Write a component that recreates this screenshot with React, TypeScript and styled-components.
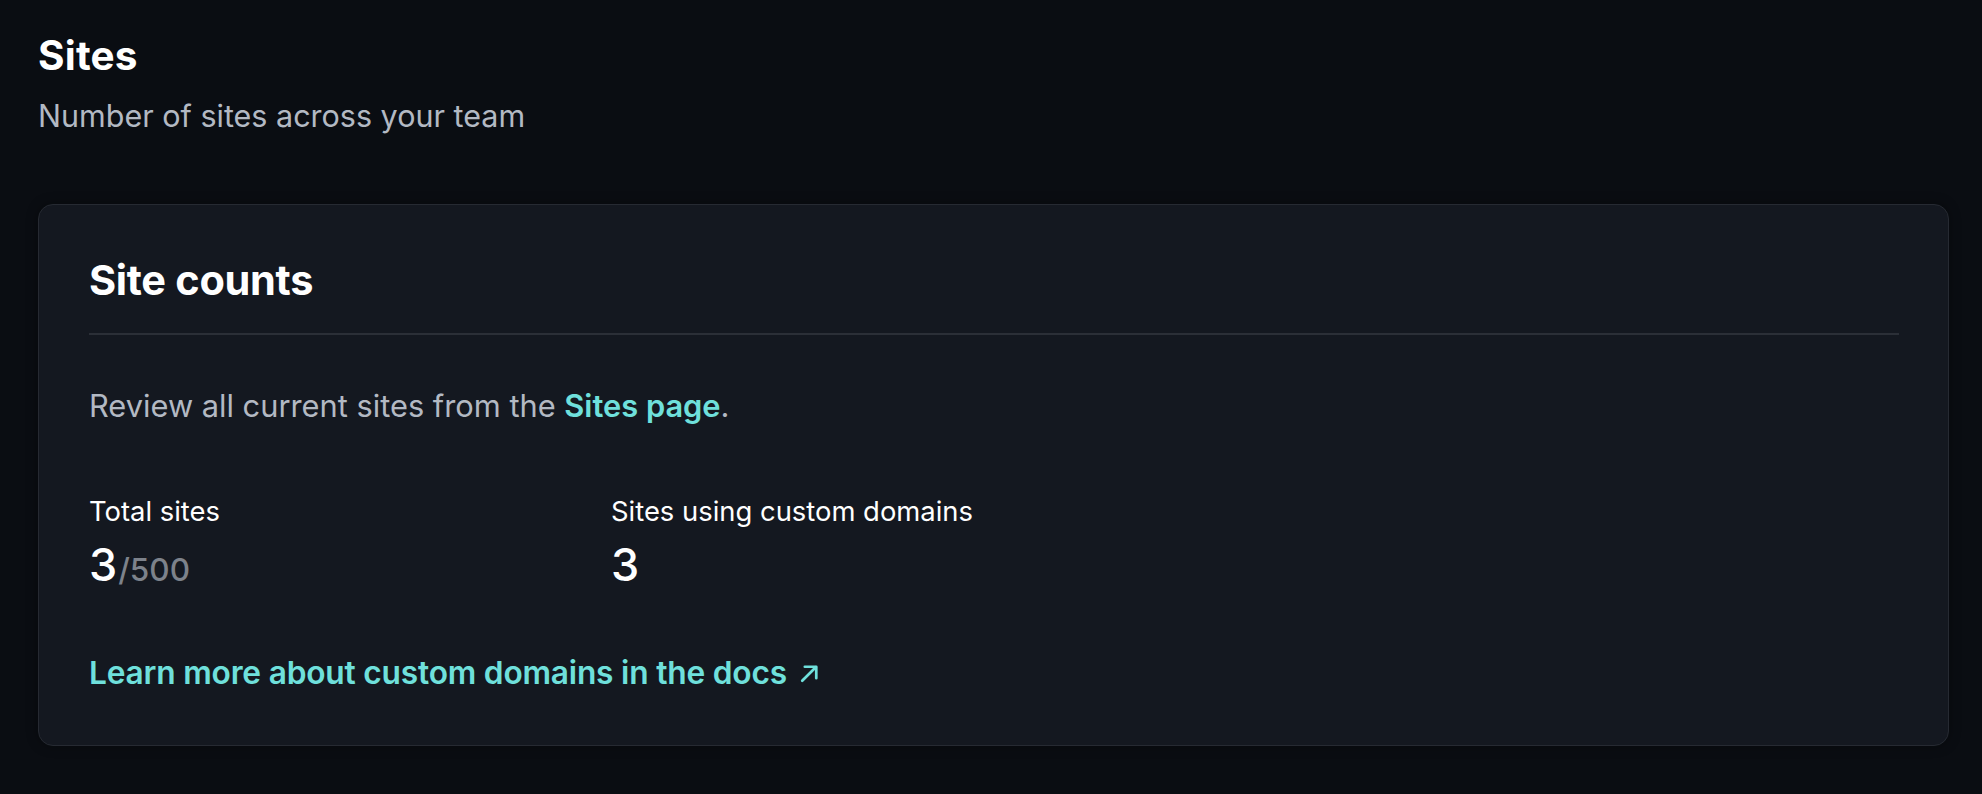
import React from "react";
import styled, { createGlobalStyle } from "styled-components";

const Global = createGlobalStyle`
  html, body { margin: 0; padding: 0; background: #0a0d12; }
  body { font-family: Inter, "Noto Sans", sans-serif; -webkit-font-smoothing: antialiased; }
  * { box-sizing: border-box; }
`;

const Page = styled.main`
  padding: 32px 33px 40px 38px;
  display: flex;
  flex-direction: column;
`;

const Title = styled.h1`
  margin: 0;
  font-size: 40.5px;
  line-height: 1.2;
  font-weight: 700;
  color: #ffffff;
  letter-spacing: 0.2px;
`;

const Subtitle = styled.p`
  margin: 14px 0 0;
  font-size: 30.5px;
  line-height: 1.4;
  color: #b3b9c3;
`;

const Card = styled.section`
  margin-top: 67px;
  background: #141820;
  border: 1px solid #262a32;
  border-radius: 15px;
  padding: 51px 49px 48px 50px;
  box-shadow: 0 0 12px rgba(0, 0, 0, 0.35);
`;

const CardHeader = styled.header`
  padding-bottom: 27px;
  border-bottom: 2px solid #2b2f37;
`;

const CardTitle = styled.h2`
  margin: 0;
  font-size: 41.5px;
  line-height: 1.2;
  font-weight: 700;
  color: #ffffff;
  letter-spacing: -0.3px;
`;

const Body = styled.p`
  margin: 48px 0 0;
  font-size: 30.8px;
  line-height: 1.5;
  color: #b3b9c3;
`;

const Link = styled.a`
  color: #6fe0dc;
  font-weight: 600;
  text-decoration: none;
`;

const Stats = styled.div`
  margin-top: 62px;
  display: grid;
  grid-template-columns: 522px 522px;
`;

const Stat = styled.div`
  display: flex;
  flex-direction: column;
  gap: 6px;
`;

const StatLabel = styled.div`
  font-size: 27.4px;
  line-height: 1.5;
  color: #ffffff;
`;

const StatValue = styled.div`
  font-size: 45px;
  line-height: 1.2;
  font-weight: 500;
  color: #ffffff;
  display: flex;
  align-items: baseline;
  gap: 1px;
`;

const StatLimit = styled.span`
  font-size: 31.5px;
  font-weight: 500;
  color: #7d828b;
`;

const DocsLink = styled.a`
  margin-top: 57px;
  display: inline-flex;
  align-items: center;
  gap: 10px;
  font-size: 31.7px;
  line-height: 1.5;
  font-weight: 600;
  color: #6fe0dc;
  text-decoration: none;
  letter-spacing: -0.2px;
`;

const Footer = styled.div`
  display: flex;
`;

const Arrow = () => (
  <svg width="25" height="25" viewBox="0 0 24 24" fill="none" stroke="#6fe0dc" strokeWidth="2.6" strokeLinecap="round" strokeLinejoin="round">
    <path d="M5 19 L18 6" />
    <path d="M7.5 5.5 H18.5 V16.5" />
  </svg>
);

export default function App() {
  return (
    <>
      <Global />
      <Page>
        <Title>Sites</Title>
        <Subtitle>Number of sites across your team</Subtitle>
        <Card>
          <CardHeader>
            <CardTitle>Site counts</CardTitle>
          </CardHeader>
          <Body>
            Review all current sites from the <Link href="#">Sites page</Link>.
          </Body>
          <Stats>
            <Stat>
              <StatLabel>Total sites</StatLabel>
              <StatValue>
                3<StatLimit>/500</StatLimit>
              </StatValue>
            </Stat>
            <Stat>
              <StatLabel>Sites using custom domains</StatLabel>
              <StatValue>3</StatValue>
            </Stat>
          </Stats>
          <Footer>
            <DocsLink href="#">
              Learn more about custom domains in the docs <Arrow />
            </DocsLink>
          </Footer>
        </Card>
      </Page>
    </>
  );
}
